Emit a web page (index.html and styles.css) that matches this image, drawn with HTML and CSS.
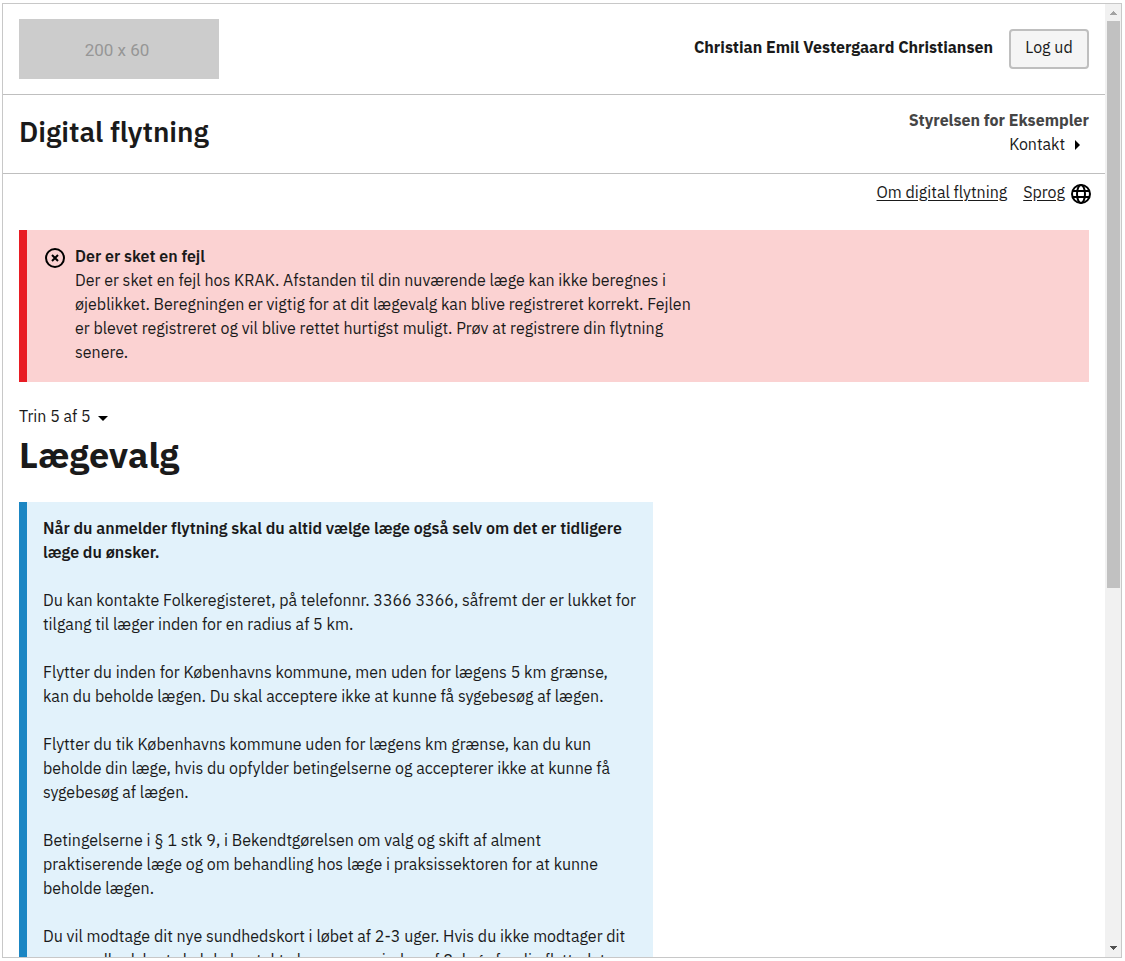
FILE: index.html
```
<!DOCTYPE html>
<html lang="da">
<head>
<meta charset="utf-8">
<meta name="viewport" content="width=device-width, initial-scale=1">
<title>Digital flytning – Lægevalg</title>
<link rel="stylesheet" href="styles.css">
</head>
<body>
<div class="frame">
  <div class="page">
    <header class="portal-header">
      <div class="logo">200 x 60</div>
      <div class="user">
        <span class="user-name">Christian Emil Vestergaard Christiansen</span>
        <button class="button" type="button">Log ud</button>
      </div>
    </header>
    <div class="solution-header">
      <div class="solution-title">Digital flytning</div>
      <div class="authority">
        <span class="authority-name">Styrelsen for Eksempler</span>
        <a class="contact" href="#kontakt">Kontakt
          <svg class="arrow-right" viewBox="0 0 24 24" aria-hidden="true"><path d="M10 7v10l5-5z"/></svg>
        </a>
      </div>
    </div>
    <nav class="links">
      <a href="#om">Om digital flytning</a>
      <a class="language" href="#sprog"><span>Sprog</span>
        <svg class="globe" viewBox="0 0 24 24" aria-hidden="true"><g fill="none" stroke="#000" stroke-width="2"><circle cx="12" cy="12" r="9"/><ellipse cx="12" cy="12" rx="4" ry="9"/><path d="M4 9h16M4 15h16"/></g></svg>
      </a>
    </nav>
    <main class="content">
      <div class="alert" role="alert">
        <svg class="alert-icon" viewBox="0 0 24 24" aria-hidden="true"><g fill="none" stroke="#000" stroke-width="2"><circle cx="12" cy="12" r="9"/><path d="M9 9l6 6M15 9l-6 6"/></g></svg>
        <div>
          <h2 class="alert-title">Der er sket en fejl</h2>
          <p>Der er sket en fejl hos KRAK. Afstanden til din nuværende læge kan ikke beregnes i<br>øjeblikket. Beregningen er vigtig for at dit lægevalg kan blive registreret korrekt. Fejlen<br>er blevet registreret og vil blive rettet hurtigst muligt. Prøv at registrere din flytning<br>senere.</p>
        </div>
      </div>
      <button class="step" type="button">Trin 5 af 5
        <svg class="arrow-down" viewBox="0 0 24 24" aria-hidden="true"><path d="M7 10h10l-5 5z"/></svg>
      </button>
      <h1 class="heading">Lægevalg</h1>
      <div class="info">
        <p class="info-lead">Når du anmelder flytning skal du altid vælge læge også selv om det er tidligere<br>læge du ønsker.</p>
        <p>Du kan kontakte Folkeregisteret, på telefonnr. 3366 3366, såfremt der er lukket for<br>tilgang til læger inden for en radius af 5 km.</p>
        <p>Flytter du inden for Københavns kommune, men uden for lægens 5 km grænse,<br>kan du beholde lægen. Du skal acceptere ikke at kunne få sygebesøg af lægen.</p>
        <p>Flytter du tik Københavns kommune uden for lægens km grænse, kan du kun<br>beholde din læge, hvis du opfylder betingelserne og accepterer ikke at kunne få<br>sygebesøg af lægen.</p>
        <p>Betingelserne i § 1 stk 9, i Bekendtgørelsen om valg og skift af alment<br>praktiserende læge og om behandling hos læge i praksissektoren for at kunne<br>beholde lægen.</p>
        <p>Du vil modtage dit nye sundhedskort i løbet af 2-3 uger. Hvis du ikke modtager dit<br>nye sundhedskort skal du kontakte kommunen inden af 8 dage fra din flyttedato.</p>
      </div>
    </main>
  </div>
  <div class="scrollbar" aria-hidden="true">
    <svg class="scroll-arrow" viewBox="0 0 16 17"><path fill="#a3a3a3" d="M8 7h1v1h1v1h1v1h1v1H5v-1h1V9h1V8h1z"/></svg>
    <div class="scroll-track"><div class="scroll-thumb"></div></div>
    <svg class="scroll-arrow" viewBox="0 0 16 17"><path fill="#505050" d="M5 6h7v1h-1v1h-1v1H9v1H8V9H7V8H6V7H5z"/></svg>
  </div>
</div>
</body>
</html>
```
FILE: styles.css
```
* {
  box-sizing: border-box;
}

body {
  display: flex;
  height: 100vh;
  margin: 0;
  padding: 3px 3px 3px 2px;
  overflow: hidden;
  background: #fff;
  color: #1a1a1a;
  font: 16px/24px "IBM Plex Sans", Inter, sans-serif;
}

h1,
h2,
p {
  margin: 0;
}

a {
  color: inherit;
}

button {
  color: inherit;
  font: inherit;
}

svg {
  display: block;
  flex: none;
}

.frame {
  display: flex;
  flex: 1;
  min-width: 0;
  border: 1px solid #c8c8c8;
}

.page {
  flex: 1;
  min-width: 0;
  overflow: hidden;
}

.portal-header {
  display: flex;
  justify-content: space-between;
  align-items: flex-start;
  padding: 15px 16px;
  border-bottom: 1px solid #bfbfbf;
}

.logo {
  display: flex;
  align-items: center;
  justify-content: center;
  width: 200px;
  height: 60px;
  padding-right: 4px;
  padding-top: 2px;
  background: #ccc;
  color: #969696;
  font: 17px/20px Roboto, sans-serif;
}

.user {
  display: flex;
  align-items: flex-start;
  gap: 16px;
  padding-top: 10px;
}

.user-name {
  padding-top: 6px;
  font-weight: 700;
}

.button {
  width: 80px;
  height: 40px;
  padding: 0 0 4px;
  border: 2px solid #bfbfbf;
  border-radius: 4px;
  background: #f5f5f5;
}

.solution-header {
  display: flex;
  justify-content: space-between;
  align-items: center;
  padding: 13px 16px 17px;
  border-bottom: 1px solid #bfbfbf;
}

.solution-title {
  font-size: 28px;
  line-height: 32px;
  font-weight: 600;
}

.authority {
  display: flex;
  flex-direction: column;
  align-items: flex-end;
}

.authority-name {
  color: #454545;
  font-weight: 700;
}

.contact {
  display: flex;
  align-items: center;
  text-decoration: none;
}

.arrow-right,
.arrow-down,
.globe,
.alert-icon {
  width: 24px;
  height: 24px;
}

.arrow-right {
  margin-top: 1px;
  margin-bottom: -1px;
}

.arrow-down,
.globe,
.alert-icon {
  margin-top: 2px;
  margin-bottom: -2px;
}

.links {
  display: flex;
  justify-content: flex-end;
  gap: 16px;
  padding: 6px 12px 26px 16px;
}

.links a {
  text-underline-offset: 2px;
}

.language {
  display: flex;
  gap: 4px;
  text-decoration: none;
}

.language span {
  text-decoration: underline;
}

.content {
  padding: 0 16px;
}

.alert {
  display: flex;
  gap: 8px;
  padding: 14px 16px 18px;
  border-left: 8px solid #e81c23;
  background: #fbd2d2;
}

.alert-title {
  font-size: 16px;
  line-height: 24px;
  font-weight: 600;
}

.step {
  display: flex;
  align-items: center;
  margin-top: 22px;
  padding: 0;
  border: 0;
  background: none;
}

.heading {
  margin-top: 5px;
  font-size: 36px;
  line-height: 44px;
  font-weight: 700;
}

.info {
  display: grid;
  gap: 24px;
  width: 634px;
  max-width: 100%;
  margin-top: 25px;
  padding: 14px 16px 16px;
  border-left: 8px solid #1b86c3;
  background: #e2f2fb;
}

.info-lead {
  font-weight: 600;
}

.scrollbar {
  display: flex;
  flex-direction: column;
  width: 16px;
  background: #f1f1f1;
}

.scroll-arrow {
  width: 16px;
  height: 17px;
}

.scroll-track {
  flex: 1;
  padding: 0 1px 0 2px;
}

.scroll-thumb {
  height: 567px;
  max-height: 100%;
  background: #c1c1c1;
}
```
